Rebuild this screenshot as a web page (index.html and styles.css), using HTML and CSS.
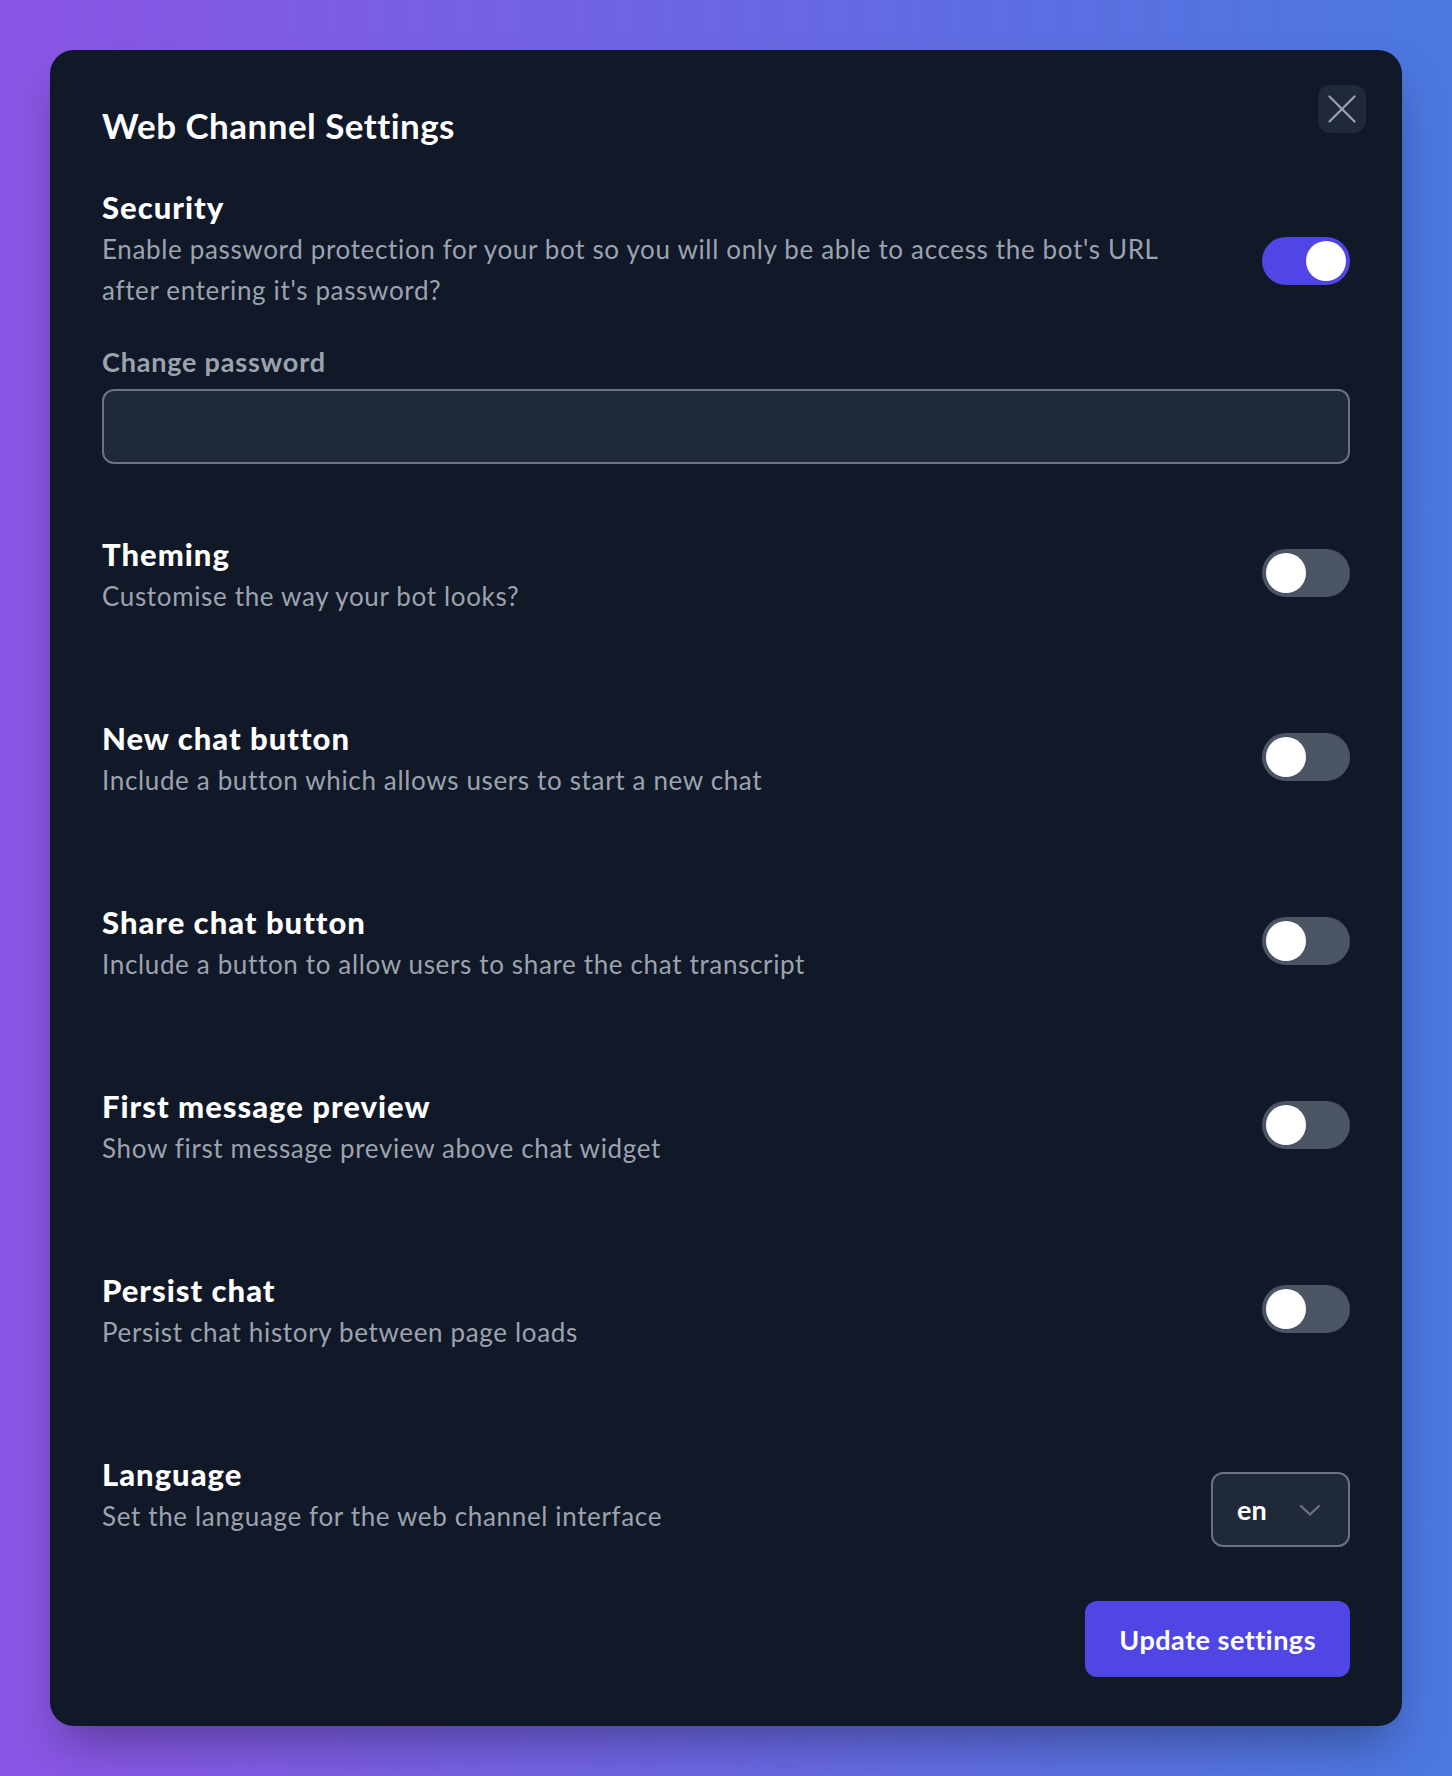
FILE: index.html
```html
<!DOCTYPE html>
<html lang="en">
<head>
    <meta charset="UTF-8">
    <meta name="viewport" content="width=device-width, initial-scale=1.0">
    <title>Web Channel Settings</title>

    <link rel="stylesheet" href="styles.css">
</head>
<body>

    <div class="modal">
        <button class="close-button" aria-label="Close">
            <svg width="28" height="28" viewBox="0 0 28 28" fill="none" stroke="currentColor" stroke-width="2.2" stroke-linecap="round">
                <path d="M1.5 1.5L26.5 26.5M26.5 1.5L1.5 26.5"/>
            </svg>
        </button>

        <h2 class="modal-title">Web Channel Settings</h2>

        <!-- Security -->
        <div class="setting setting-security">
            <div class="setting-text">
                <h3>Security</h3>
                <p>Enable password protection for your bot so you will only be able to access the bot's URL after entering it's password?</p>
            </div>
            <span class="toggle is-on"><span class="knob"></span></span>
        </div>

        <div class="field">
            <label class="field-label" for="password">Change password</label>
            <input type="password" id="password" class="text-input">
        </div>

        <div class="setting-list">
            <div class="setting">
                <div class="setting-text">
                    <h3>Theming</h3>
                    <p>Customise the way your bot looks?</p>
                </div>
                <span class="toggle"><span class="knob"></span></span>
            </div>

            <div class="setting">
                <div class="setting-text">
                    <h3>New chat button</h3>
                    <p>Include a button which allows users to start a new chat</p>
                </div>
                <span class="toggle"><span class="knob"></span></span>
            </div>

            <div class="setting">
                <div class="setting-text">
                    <h3>Share chat button</h3>
                    <p>Include a button to allow users to share the chat transcript</p>
                </div>
                <span class="toggle"><span class="knob"></span></span>
            </div>

            <div class="setting">
                <div class="setting-text">
                    <h3>First message preview</h3>
                    <p>Show first message preview above chat widget</p>
                </div>
                <span class="toggle"><span class="knob"></span></span>
            </div>

            <div class="setting">
                <div class="setting-text">
                    <h3>Persist chat</h3>
                    <p>Persist chat history between page loads</p>
                </div>
                <span class="toggle"><span class="knob"></span></span>
            </div>

            <div class="setting setting-language">
                <div class="setting-text">
                    <h3>Language</h3>
                    <p>Set the language for the web channel interface</p>
                </div>
                <div class="select-box">
                    <span>en</span>
                    <svg width="22" height="12" viewBox="0 0 22 12" fill="none" stroke="currentColor" stroke-width="2.4" stroke-linecap="round" stroke-linejoin="round">
                        <path d="M2 2l9 8.5L20 2"/>
                    </svg>
                </div>
            </div>
        </div>

        <div class="actions">
            <button class="primary-button">Update settings</button>
        </div>
    </div>

</body>
</html>
```

FILE: styles.css
```css
/* Page background */
html, body {
    margin: 0;
    padding: 0;
}

body {
    min-height: 100vh;
    box-sizing: border-box;
    padding: 50px;
    font-family: 'Lato', 'Liberation Sans', sans-serif;
    background: linear-gradient(to right, #8b55e5, #4a78e0);
    color: #fff;
}

/* Modal card */
.modal {
    position: relative;
    background-color: #111827;
    border-radius: 24px;
    padding: 51px 52px 49px 52px;
    box-shadow: 0 25px 50px -12px rgba(0, 0, 0, 0.35);
}

.close-button {
    position: absolute;
    top: 35px;
    right: 36px;
    width: 48px;
    height: 48px;
    border: none;
    border-radius: 12px;
    background-color: #1f2937;
    color: #9ca3af;
    display: flex;
    align-items: center;
    justify-content: center;
    padding: 0;
    cursor: pointer;
}

.modal-title {
    margin: 0;
    font-size: 35px;
    line-height: 48px;
    font-weight: 700;
    letter-spacing: 0.45px;
}

/* Setting rows */
.setting {
    display: flex;
    align-items: center;
    justify-content: space-between;
}

.setting .toggle {
    margin-bottom: 4px;
}

.setting-text {
    flex: 1;
    margin-right: 48px;
}

.setting-text h3 {
    margin: 0;
    font-size: 31px;
    line-height: 44px;
    font-weight: 900;
    letter-spacing: 1px;
}

.setting-text p {
    margin: 0;
    font-size: 26px;
    line-height: 41px;
    letter-spacing: 0.65px;
    color: #9ca3af;
}

.setting-security {
    align-items: flex-start;
    margin-top: 36px;
}

.setting-security .toggle {
    margin-top: 52px;
    margin-bottom: 0;
}

.setting-list {
    margin-top: 68px;
    display: flex;
    flex-direction: column;
    gap: 99px;
}

.setting-language {
    align-items: flex-start;
}

/* Toggle switch */
.toggle {
    flex-shrink: 0;
    width: 88px;
    height: 48px;
    border-radius: 24px;
    background-color: #4b5563;
    box-sizing: border-box;
    padding: 4px;
    display: flex;
    justify-content: flex-start;
}

.toggle.is-on {
    background-color: #4f46e5;
    justify-content: flex-end;
}

.toggle .knob {
    width: 40px;
    height: 40px;
    border-radius: 50%;
    background-color: #fff;
}

/* Password field */
.field {
    margin-top: 31px;
}

.field-label {
    display: block;
    font-size: 27px;
    line-height: 40px;
    font-weight: 700;
    letter-spacing: 0.8px;
    color: #9ca3af;
}

.text-input {
    display: block;
    width: 100%;
    height: 75px;
    margin-top: 7px;
    box-sizing: border-box;
    background-color: #1f2937;
    border: 2px solid #6b7280;
    border-radius: 12px;
    color: #fff;
    font-size: 26px;
    padding: 0 20px;
}

/* Language select */
.select-box {
    flex-shrink: 0;
    margin-top: 20px;
    width: 139px;
    height: 75px;
    box-sizing: border-box;
    border: 2px solid #6b7280;
    border-radius: 12px;
    background-color: #1f2937;
    display: flex;
    align-items: center;
    justify-content: space-between;
    padding: 0 27px 0 24px;
    font-size: 27px;
    font-weight: 700;
    color: #fff;
}

.select-box svg {
    color: #6b7280;
}

/* Footer button */
.actions {
    margin-top: 54px;
    display: flex;
    justify-content: flex-end;
}

.primary-button {
    height: 76px;
    padding: 0 34px;
    border: none;
    border-radius: 12px;
    background-color: #4f46e5;
    color: #fff;
    font-family: inherit;
    font-size: 27px;
    font-weight: 700;
    letter-spacing: 0.5px;
    cursor: pointer;
}
```
